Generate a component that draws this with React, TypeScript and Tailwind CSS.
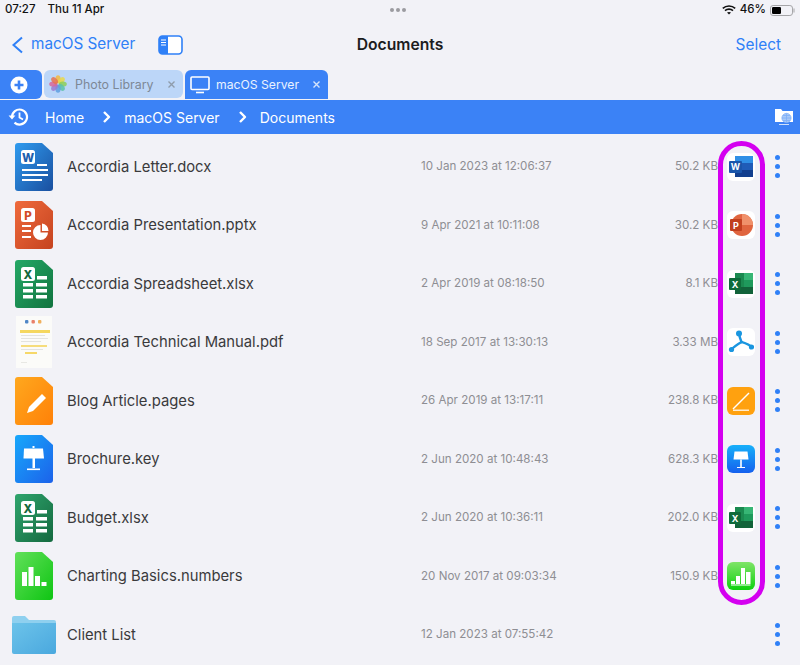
import React from "react";

type Kind = "word" | "ppt" | "xls" | "pdf" | "pages" | "key" | "xls2" | "num" | "folder";

const rows: { name: string; date: string; size: string; kind: Kind; app?: string }[] = [
  { name: "Accordia Letter.docx", date: "10 Jan 2023 at 12:06:37", size: "50.2 KB", kind: "word", app: "word" },
  { name: "Accordia Presentation.pptx", date: "9 Apr 2021 at 10:11:08", size: "30.2 KB", kind: "ppt", app: "ppt" },
  { name: "Accordia Spreadsheet.xlsx", date: "2 Apr 2019 at 08:18:50", size: "8.1 KB", kind: "xls", app: "xls" },
  { name: "Accordia Technical Manual.pdf", date: "18 Sep 2017 at 13:30:13", size: "3.33 MB", kind: "pdf", app: "pdf" },
  { name: "Blog Article.pages", date: "26 Apr 2019 at 13:17:11", size: "238.8 KB", kind: "pages", app: "pages" },
  { name: "Brochure.key", date: "2 Jun 2020 at 10:48:43", size: "628.3 KB", kind: "key", app: "key" },
  { name: "Budget.xlsx", date: "2 Jun 2020 at 10:36:11", size: "202.0 KB", kind: "xls2", app: "xls" },
  { name: "Charting Basics.numbers", date: "20 Nov 2017 at 09:03:34", size: "150.9 KB", kind: "num", app: "num" },
  { name: "Client List", date: "12 Jan 2023 at 07:55:42", size: "", kind: "folder" },
];

const SHEET = "M3 0H27L38 10V45A3 3 0 0 1 35 48H3A3 3 0 0 1 0 45V3A3 3 0 0 1 3 0Z";

function Sheet({ id, from, to, children }: { id: string; from: string; to: string; children?: React.ReactNode }) {
  return (
    <svg width="38" height="48" viewBox="0 0 38 48">
      <defs>
        <linearGradient id={id} x1="0" y1="0" x2="1" y2="1">
          <stop offset="0" stopColor={from} />
          <stop offset="1" stopColor={to} />
        </linearGradient>
      </defs>
      <path d={SHEET} fill={`url(#${id})`} />
      {children}
    </svg>
  );
}

function Badge({ letter, color }: { letter: string; color: string }) {
  return (
    <g>
      <rect x="6" y="7" width="14" height="14" rx="2.5" fill="#fff" />
      <text x="13" y="18.5" textAnchor="middle" fontSize="11.5" fontWeight="800" fontFamily="Inter, sans-serif" fill={color}>
        {letter}
      </text>
    </g>
  );
}

function XlsBody() {
  return (
    <g fill="#fff">
      <rect x="22" y="16" width="10" height="3.5" />
      <rect x="8" y="23" width="10" height="3.5" />
      <rect x="21" y="23" width="11" height="3.5" />
      <rect x="8" y="29" width="10" height="3.5" />
      <rect x="21" y="29" width="11" height="3.5" />
      <rect x="8" y="35" width="10" height="3.5" />
      <rect x="21" y="35" width="11" height="3.5" />
    </g>
  );
}

function FileIcon({ kind }: { kind: Kind }) {
  switch (kind) {
    case "word":
      return (
        <Sheet id="fw" from="#2f9bef" to="#1a4f9f">
          <Badge letter="W" color="#1d5fae" />
          <g fill="#fff">
            <rect x="22" y="21" width="10" height="2" />
            <rect x="7" y="26" width="26" height="2" />
            <rect x="7" y="31" width="26" height="2" />
            <rect x="7" y="36" width="20" height="2" />
          </g>
        </Sheet>
      );
    case "ppt":
      return (
        <Sheet id="fp" from="#ef6a3c" to="#c5431f">
          <Badge letter="P" color="#d24b26" />
          <g fill="#fff">
            <rect x="7" y="24" width="9" height="2" />
            <rect x="7" y="29" width="9" height="2" />
            <rect x="7" y="35" width="9" height="2" />
            <path d="M25.5 31.5H33A7.5 7.5 0 1 1 25.5 24Z" />
            <path d="M27 22.5A7 7 0 0 1 33.5 30H27Z" />
          </g>
        </Sheet>
      );
    case "xls":
      return (
        <Sheet id="fx" from="#25a866" to="#11743f">
          <Badge letter="X" color="#14683c" />
          <XlsBody />
        </Sheet>
      );
    case "xls2":
      return (
        <Sheet id="fx2" from="#2fa56d" to="#14693f">
          <Badge letter="X" color="#14683c" />
          <XlsBody />
        </Sheet>
      );
    case "pages":
      return (
        <Sheet id="fg" from="#ffa81e" to="#ff8108">
          <path d="M12 36L14 30L27 17L31 21L18 34Z" fill="#fff" />
        </Sheet>
      );
    case "key":
      return (
        <Sheet id="fk" from="#17a8fb" to="#1c62ea">
          <g fill="#fff">
            <path d="M17.5 11H19.5V13H17.5Z" />
            <path d="M9 13.5H28L29 23.5H8.5Z" />
            <rect x="17.5" y="23" width="2.5" height="10" />
            <rect x="12" y="33.5" width="13" height="1.6" />
          </g>
        </Sheet>
      );
    case "num":
      return (
        <Sheet id="fn" from="#62e05a" to="#0fc513">
          <g fill="#fff">
            <rect x="7" y="20" width="5" height="14" />
            <rect x="13.5" y="15" width="5" height="19" />
            <rect x="20" y="24" width="5" height="10" />
            <rect x="26.5" y="30" width="5" height="4" />
          </g>
        </Sheet>
      );
    case "pdf":
      return (
        <svg width="38" height="52" viewBox="0 0 38 52">
          <rect x="1" y="0" width="36" height="52" fill="#fbfbf9" />
          <rect x="10" y="4" width="3.4" height="3.4" rx="1" fill="#4f86c6" />
          <rect x="16.5" y="4" width="3.4" height="3.4" rx="1" fill="#e9806a" />
          <rect x="23" y="4" width="3.4" height="3.4" rx="1" fill="#f0b05c" />
          <rect x="5" y="14" width="30" height="3" fill="#f5d75e" />
          <g fill="#e3e3df">
            <rect x="6" y="19" width="24" height="1" />
            <rect x="6" y="22" width="27" height="1" />
            <rect x="6" y="25" width="20" height="1" />
          </g>
          <rect x="6" y="29" width="26" height="2" fill="#f6dd7c" />
          <g fill="#e3e3df">
            <rect x="6" y="33" width="22" height="1" />
          </g>
          <rect x="10" y="36" width="12" height="2" fill="#f6d869" />
          <rect x="6" y="46" width="6" height="1" fill="#e8e8e4" />
        </svg>
      );
    case "folder":
      return (
        <svg width="44" height="38" viewBox="0 0 44 38">
          <defs>
            <linearGradient id="ff" x1="0" y1="0" x2="1" y2="1">
              <stop offset="0" stopColor="#6cc3ea" />
              <stop offset="1" stopColor="#4aa8de" />
            </linearGradient>
          </defs>
          <path d="M2 0H13L17 4H42A2 2 0 0 1 44 6V8H0V2A2 2 0 0 1 2 0Z" fill="#8fd0ef" />
          <path d="M0 7H44V36A2 2 0 0 1 42 38H2A2 2 0 0 1 0 36Z" fill="url(#ff)" />
        </svg>
      );
  }
}

function AppIcon({ app }: { app: string }) {
  if (app === "pages")
    return (
      <svg width="28" height="28" viewBox="0 0 28 28">
        <rect width="28" height="28" rx="6" fill="#ffa10f" />
        <path d="M6 22L22 6" stroke="#fff" strokeWidth="1.4" />
        <path d="M6 23.2H22" stroke="#fff" strokeWidth="1.2" />
      </svg>
    );
  if (app === "key")
    return (
      <svg width="28" height="28" viewBox="0 0 28 28">
        <defs>
          <linearGradient id="ak" x1="0" y1="0" x2="0" y2="1">
            <stop offset="0" stopColor="#17b0fa" />
            <stop offset="1" stopColor="#1560ee" />
          </linearGradient>
        </defs>
        <rect width="28" height="28" rx="6" fill="url(#ak)" />
        <path d="M7.5 6.5H20.5L21.5 14.5H6.5Z" fill="#fff" />
        <rect x="13.2" y="14.5" width="1.6" height="7.5" fill="#fff" />
        <rect x="10" y="22" width="8" height="1" fill="#fff" />
      </svg>
    );
  if (app === "num")
    return (
      <svg width="28" height="28" viewBox="0 0 28 28">
        <defs>
          <linearGradient id="an" x1="0" y1="0" x2="0" y2="1">
            <stop offset="0" stopColor="#7fe468" />
            <stop offset="1" stopColor="#0ed10e" />
          </linearGradient>
        </defs>
        <rect width="28" height="28" rx="6" fill="url(#an)" />
        <g fill="#fff">
          <rect x="4" y="19" width="4" height="3" />
          <rect x="9" y="14" width="4" height="8" />
          <rect x="14" y="6" width="4" height="16" />
          <rect x="19" y="10" width="4.5" height="12" />
          <rect x="4" y="22.5" width="19.5" height="1" />
        </g>
      </svg>
    );
  return (
    <div className="w-7 h-7 rounded-md bg-white flex items-center justify-center">
      {app === "word" && (
        <svg width="24" height="22" viewBox="0 0 24 22">
          <rect x="6" y="0" width="18" height="21" fill="#1f5cb8" />
          <rect x="6" y="0" width="18" height="7" fill="#2f8fe6" />
          <rect x="6" y="14" width="18" height="7" fill="#123f8f" />
          <rect x="0" y="5" width="13" height="12" rx="1" fill="#1a56ab" />
          <text x="6.5" y="14" textAnchor="middle" fontSize="9" fontWeight="700" fontFamily="Inter, sans-serif" fill="#fff">
            W
          </text>
        </svg>
      )}
      {app === "ppt" && (
        <svg width="24" height="22" viewBox="0 0 24 22">
          <circle cx="13" cy="11" r="11" fill="#e0653f" />
          <path d="M13 0A11 11 0 0 1 24 11H13Z" fill="#f0916b" />
          <rect x="1" y="5" width="12" height="12" rx="1" fill="#c2401e" />
          <text x="7" y="14.5" textAnchor="middle" fontSize="9" fontWeight="700" fontFamily="Inter, sans-serif" fill="#fff">
            P
          </text>
        </svg>
      )}
      {app === "xls" && (
        <svg width="24" height="22" viewBox="0 0 24 22">
          <rect x="6" y="0" width="18" height="21" fill="#1b8a50" />
          <rect x="15" y="0" width="9" height="7" fill="#37b675" />
          <rect x="15" y="7" width="9" height="7" fill="#1f9a5c" />
          <rect x="6" y="14" width="18" height="7" fill="#12633a" />
          <rect x="0" y="5" width="12" height="12" rx="1" fill="#0f6b3a" />
          <text x="6" y="14.5" textAnchor="middle" fontSize="9" fontWeight="700" fontFamily="Inter, sans-serif" fill="#fff">
            X
          </text>
        </svg>
      )}
      {app === "pdf" && (
        <svg width="26" height="26" viewBox="0 0 26 26">
          <g fill="none" stroke="#1a96e0" strokeLinecap="round" strokeWidth="2.4">
            <path d="M11 4C11.5 8 12.5 11 13.5 13" />
            <path d="M13.5 13C10 15 6 17.5 3 21" />
            <path d="M13.5 13C17 14 21 15 24 18.5" />
          </g>
          <g fill="#1a96e0">
            <circle cx="11" cy="4.5" r="3" />
            <circle cx="3.5" cy="20.5" r="2.6" />
            <circle cx="23.5" cy="18" r="2.6" />
          </g>
        </svg>
      )}
    </div>
  );
}

function Dots() {
  return (
    <div className="flex flex-col gap-[4px] items-center">
      <span className="w-[5px] h-[5px] rounded-full bg-[#2f80f7]" />
      <span className="w-[5px] h-[5px] rounded-full bg-[#2f80f7]" />
      <span className="w-[5px] h-[5px] rounded-full bg-[#2f80f7]" />
    </div>
  );
}

function Chevron() {
  return (
    <svg width="9" height="12" viewBox="0 0 9 12" fill="none" stroke="#fff" strokeWidth="2.4" strokeLinejoin="round">
      <path d="M2 1L7 6L2 11" />
    </svg>
  );
}

function Close({ color }: { color: string }) {
  return (
    <svg width="7" height="7" viewBox="0 0 7 7" stroke={color} strokeWidth="1.4">
      <path d="M0.5 0.5L6.5 6.5M6.5 0.5L0.5 6.5" />
    </svg>
  );
}

function PhotosIcon() {
  const colors = ["#f4b942", "#e9d84a", "#8ccf5b", "#5cc2a9", "#5f9fe0", "#9a7bd0", "#d8679a", "#e8734f"];
  return (
    <svg width="18" height="18" viewBox="0 0 18 18">
      {colors.map((c, i) => (
        <ellipse key={c} cx="9" cy="4.2" rx="2.6" ry="4" fill={c} opacity="0.85" transform={`rotate(${i * 45} 9 9)`} />
      ))}
    </svg>
  );
}

export default function App() {
  return (
    <div className="relative w-[800px] h-[665px] overflow-hidden bg-[#f2f2f7] text-[#3a3a3c] font-['Inter','Liberation_Sans',sans-serif]">
      {/* status bar */}
      <div className="h-[19px] flex items-center pl-[5px] pr-[5px] pt-[1px] text-[11.5px] font-medium text-[#111] relative">
        <span>07:27</span>
        <span className="ml-[12px]">Thu 11 Apr</span>
        <div className="absolute left-[390px] top-[8px] flex gap-[2px]">
          <span className="w-[4px] h-[4px] rounded-full bg-[#9b9ba0]" />
          <span className="w-[4px] h-[4px] rounded-full bg-[#9b9ba0]" />
          <span className="w-[4px] h-[4px] rounded-full bg-[#9b9ba0]" />
        </div>
        <div className="ml-auto flex items-center gap-[4px]">
          <svg width="14" height="10" viewBox="0 0 14 10" fill="none" stroke="#111" strokeWidth="1.6">
            <path d="M0.8 3.4C4.2 0.2 9.8 0.2 13.2 3.4" />
            <path d="M3 5.6C5.2 3.6 8.8 3.6 11 5.6" />
            <path d="M7 9.6L5 7.6C6 6.7 8 6.7 9 7.6Z" fill="#111" stroke="none" />
          </svg>
          <span>46%</span>
          <svg width="25" height="11" viewBox="0 0 25 11">
            <rect x="0.5" y="0.5" width="22" height="10" rx="2.6" fill="#f2f2f7" stroke="#a5a5a8" />
            <rect x="2" y="2" width="9" height="7" rx="1.2" fill="#000" />
            <rect x="23.5" y="3.5" width="1" height="4" fill="#a5a5a8" />
          </svg>
        </div>
      </div>

      {/* nav bar */}
      <div className="h-[51px] relative flex items-center pl-[11px] pr-[19px]">
        <svg width="13" height="18" viewBox="0 0 13 18" fill="none" stroke="#2f80f7" strokeWidth="2">
          <path d="M11 1.5L2.5 9L11 16.5" />
        </svg>
        <span className="ml-[7px] text-[15.3px] text-[#2f80f7]">macOS Server</span>
        <svg className="ml-[23px]" width="25" height="20" viewBox="0 0 25 20">
          <rect x="1" y="1" width="23" height="18" rx="3.5" fill="#fff" stroke="#2f80f7" strokeWidth="1.6" />
          <path d="M4.5 1H10V19H4.5A3.5 3.5 0 0 1 1 15.5V4.5A3.5 3.5 0 0 1 4.5 1Z" fill="#2f80f7" />
          <path d="M3 5H8M3 7.5H8M3 10H8" stroke="#fff" strokeWidth="1" />
        </svg>
        <span className="absolute left-0 right-0 text-center text-[15.7px] font-semibold text-[#1c1c1e]">Documents</span>
        <span className="ml-auto text-[15.4px] text-[#2f80f7]">Select</span>
      </div>

      {/* tabs */}
      <div className="h-[29px] flex items-stretch gap-[2px]">
        <div className="w-[42px] rounded-tr-[6px] rounded-br-[6px] bg-[#3b82f6] flex items-center justify-center pr-[4px]">
          <svg width="18" height="18" viewBox="0 0 18 18">
            <circle cx="9" cy="9" r="8.5" fill="#fff" />
            <path d="M9 4.5V13.5M4.5 9H13.5" stroke="#3b82f6" strokeWidth="2.6" />
          </svg>
        </div>
        <div className="w-[139px] h-[28px] rounded-[6px] bg-[#bcd6f8] flex items-center pl-[5px] pr-[8px]">
          <PhotosIcon />
          <span className="ml-[8px] pt-[2px] text-[12.4px] text-[#7d8896]">Photo Library</span>
          <span className="ml-auto">
            <Close color="#8f9cab" />
          </span>
        </div>
        <div className="w-[143px] h-[29px] rounded-t-[6px] bg-[#3b82f6] flex items-center pl-[5px] pr-[8px]">
          <svg width="20" height="18" viewBox="0 0 20 18" fill="none" stroke="#fff">
            <rect x="1" y="1" width="18" height="12.5" rx="1" strokeWidth="1.6" />
            <path d="M6 16.5H14" strokeWidth="1.6" />
          </svg>
          <span className="ml-[6px] pt-[2px] text-[12.2px] text-[#eaf2ff]">macOS Server</span>
          <span className="ml-auto">
            <Close color="#d5e4fb" />
          </span>
        </div>
      </div>

      {/* path bar */}
      <div className="mt-[1px] h-[34px] bg-[#3b82f6] flex items-center pl-[8px] pr-[6px] text-[14px] text-white">
        <svg width="21" height="20" viewBox="0 0 21 20" fill="none" stroke="#fff" strokeWidth="2.2">
          <path d="M4 10A7.5 7.5 0 1 1 6.5 15.6" />
          <path d="M0.6 8.4H7.4L4 12.6Z" fill="#fff" stroke="none" />
          <path d="M11.5 5.5V10.5L15 12.5" strokeWidth="1.8" />
        </svg>
        <span className="ml-[16px]">Home</span>
        <span className="ml-[18px]">
          <Chevron />
        </span>
        <span className="ml-[13px]">macOS Server</span>
        <span className="ml-[18px]">
          <Chevron />
        </span>
        <span className="ml-[13px]">Documents</span>
        <svg className="ml-auto" width="20" height="20" viewBox="0 0 20 20">
          <path d="M1 2H7L8.5 4H19V15H1Z" fill="#fff" />
          <g stroke="#7fb0f7" strokeWidth="0.8" fill="none">
            <circle cx="12.5" cy="11" r="4.6" fill="#a9c9f8" />
            <path d="M8 11H17M12.5 6.4V15.6M9 8.5H16M9 13.5H16" />
          </g>
          <rect x="5" y="17" width="10" height="1" fill="#cfe0fb" />
        </svg>
      </div>

      {/* list */}
      <div className="pt-[3.5px]">
        {rows.map((r) => (
          <div key={r.name} className="h-[58.5px] flex items-center">
            <div className={`w-[67px] flex items-center ${r.kind === "folder" ? "pl-[12px]" : "pl-[15px]"}`}>
              <FileIcon kind={r.kind} />
            </div>
            <div className="w-[354px] text-[14.8px] truncate">{r.name}</div>
            <div className="w-[200px] text-[11.6px] text-[#8e8e93]">{r.date}</div>
            <div className="w-[97px] text-right text-[11.6px] text-[#8e8e93]">{r.size}</div>
            <div className="w-[28px] ml-[9px]">{r.app && <AppIcon app={r.app} />}</div>
            <div className="ml-[20px] w-[5px]">
              <Dots />
            </div>
          </div>
        ))}
      </div>

      {/* annotation ring */}
      <div className="absolute left-[718px] top-[141px] w-[47px] h-[464px] rounded-[24px] border-[5px] border-[#d400f0]" />
    </div>
  );
}
